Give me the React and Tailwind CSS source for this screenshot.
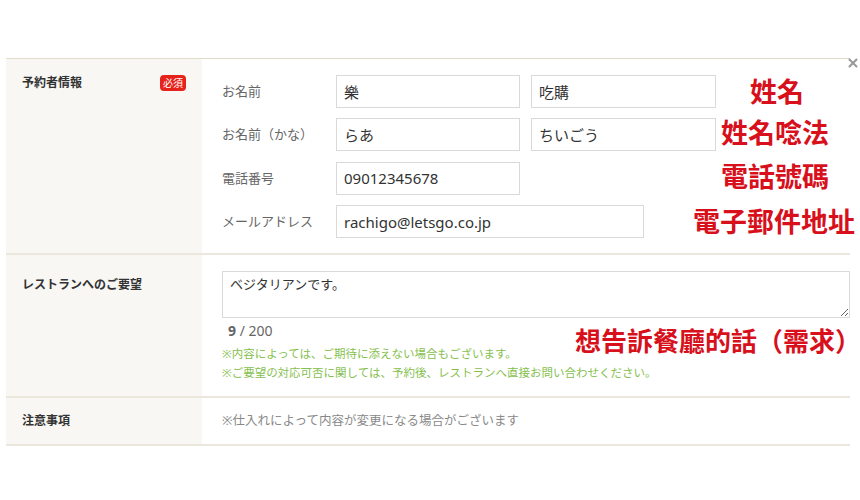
import { X } from "lucide-react";

const jp = { fontFamily: '"Noto Sans", "Noto Sans CJK JP", sans-serif' };
const tc = { fontFamily: '"Noto Sans CJK TC", sans-serif' };

function Field({ label, children }) {
  return (
    <div className="flex items-center">
      <div className="w-[114px] text-[13px] text-[#666]">{label}</div>
      <div className="flex gap-[11px]">{children}</div>
    </div>
  );
}

function TextBox({ value, width }) {
  return (
    <input
      readOnly
      defaultValue={value}
      className="h-[33px] border border-[#d9d9d9] bg-white px-[7px] text-[15px] text-[#333] outline-none"
      style={{ width }}
    />
  );
}

function Note({ text, className }) {
  return (
    <div
      className={"absolute whitespace-nowrap font-bold leading-none text-[#d7101c] " + className}
      style={tc}
    >
      {text}
    </div>
  );
}

export default function App() {
  return (
    <div className="relative h-[500px] w-[860px] bg-white" style={jp}>
      <div className="ml-[6px] pt-[58px]">
        <div className="w-[844px] border-t border-[#e2dccb]">
          {/* 予約者情報 */}
          <div className="flex border-b-2 border-[#ebe7dc]">
            <div className="flex w-[196px] items-start justify-between bg-[#f8f7f3] px-4 pt-[16px]">
              <span className="text-[12px] font-bold leading-4 text-[#333]">予約者情報</span>
              <span className="rounded-sm bg-[#e5231b] px-[3px] text-[10px] leading-4 text-white">必須</span>
            </div>
            <div className="flex flex-1 flex-col gap-[10.4px] pb-[15px] pl-5 pt-[16px]">
              <Field label="お名前">
                <TextBox value="樂" width={184} />
                <TextBox value="吃購" width={185} />
              </Field>
              <Field label="お名前（かな）">
                <TextBox value="らあ" width={184} />
                <TextBox value="ちいごう" width={185} />
              </Field>
              <Field label="電話番号">
                <TextBox value="09012345678" width={184} />
              </Field>
              <Field label="メールアドレス">
                <TextBox value="rachigo@letsgo.co.jp" width={308} />
              </Field>
            </div>
          </div>

          {/* レストランへのご要望 */}
          <div className="flex border-b-2 border-[#ebe7dc]">
            <div className="w-[196px] bg-[#f8f7f3] px-4 pt-4">
              <span className="text-[12px] font-bold leading-4 text-[#333]">レストランへのご要望</span>
            </div>
            <div className="flex-1 pb-[14px] pl-5 pt-4">
              <textarea
                readOnly
                defaultValue="ベジタリアンです。"
                className="block h-[47px] w-full border border-[#d9d9d9] px-[7px] py-[3px] text-[13px] text-[#333] outline-none"
              />
              <div className="mt-[3px] pl-[6px] text-[14px] leading-5 text-[#666]">
                <span className="font-bold">9</span> / 200
              </div>
              <div className="mt-[3px] text-[11.5px] leading-[19px] text-[#86bf4f]">
                <div>※内容によっては、ご期待に添えない場合もございます。</div>
                <div>※ご要望の対応可否に関しては、予約後、レストランへ直接お問い合わせください。</div>
              </div>
            </div>
          </div>

          {/* 注意事項 */}
          <div className="flex h-[48px] border-b-2 border-[#ebe7dc]">
            <div className="flex w-[196px] items-center bg-[#f8f7f3] px-4">
              <span className="text-[12px] font-bold text-[#333]">注意事項</span>
            </div>
            <div className="flex flex-1 items-center pl-5 text-[12.5px] text-[#888]">
              ※仕入れによって内容が変更になる場合がございます
            </div>
          </div>
        </div>
      </div>

      <X className="absolute left-[846px] top-[56px] text-[#999]" size={14} strokeWidth={3.5} />

      <Note text="姓名" className="left-[750px] top-[77px] text-[27px]" />
      <Note text="姓名唸法" className="left-[721px] top-[118px] text-[27px]" />
      <Note text="電話號碼" className="left-[721px] top-[162px] text-[27px]" />
      <Note text="電子郵件地址" className="left-[693px] top-[207px] text-[27px]" />
      <Note text="想告訴餐廳的話（需求）" className="left-[575px] top-[327px] text-[26px]" />
    </div>
  );
}
